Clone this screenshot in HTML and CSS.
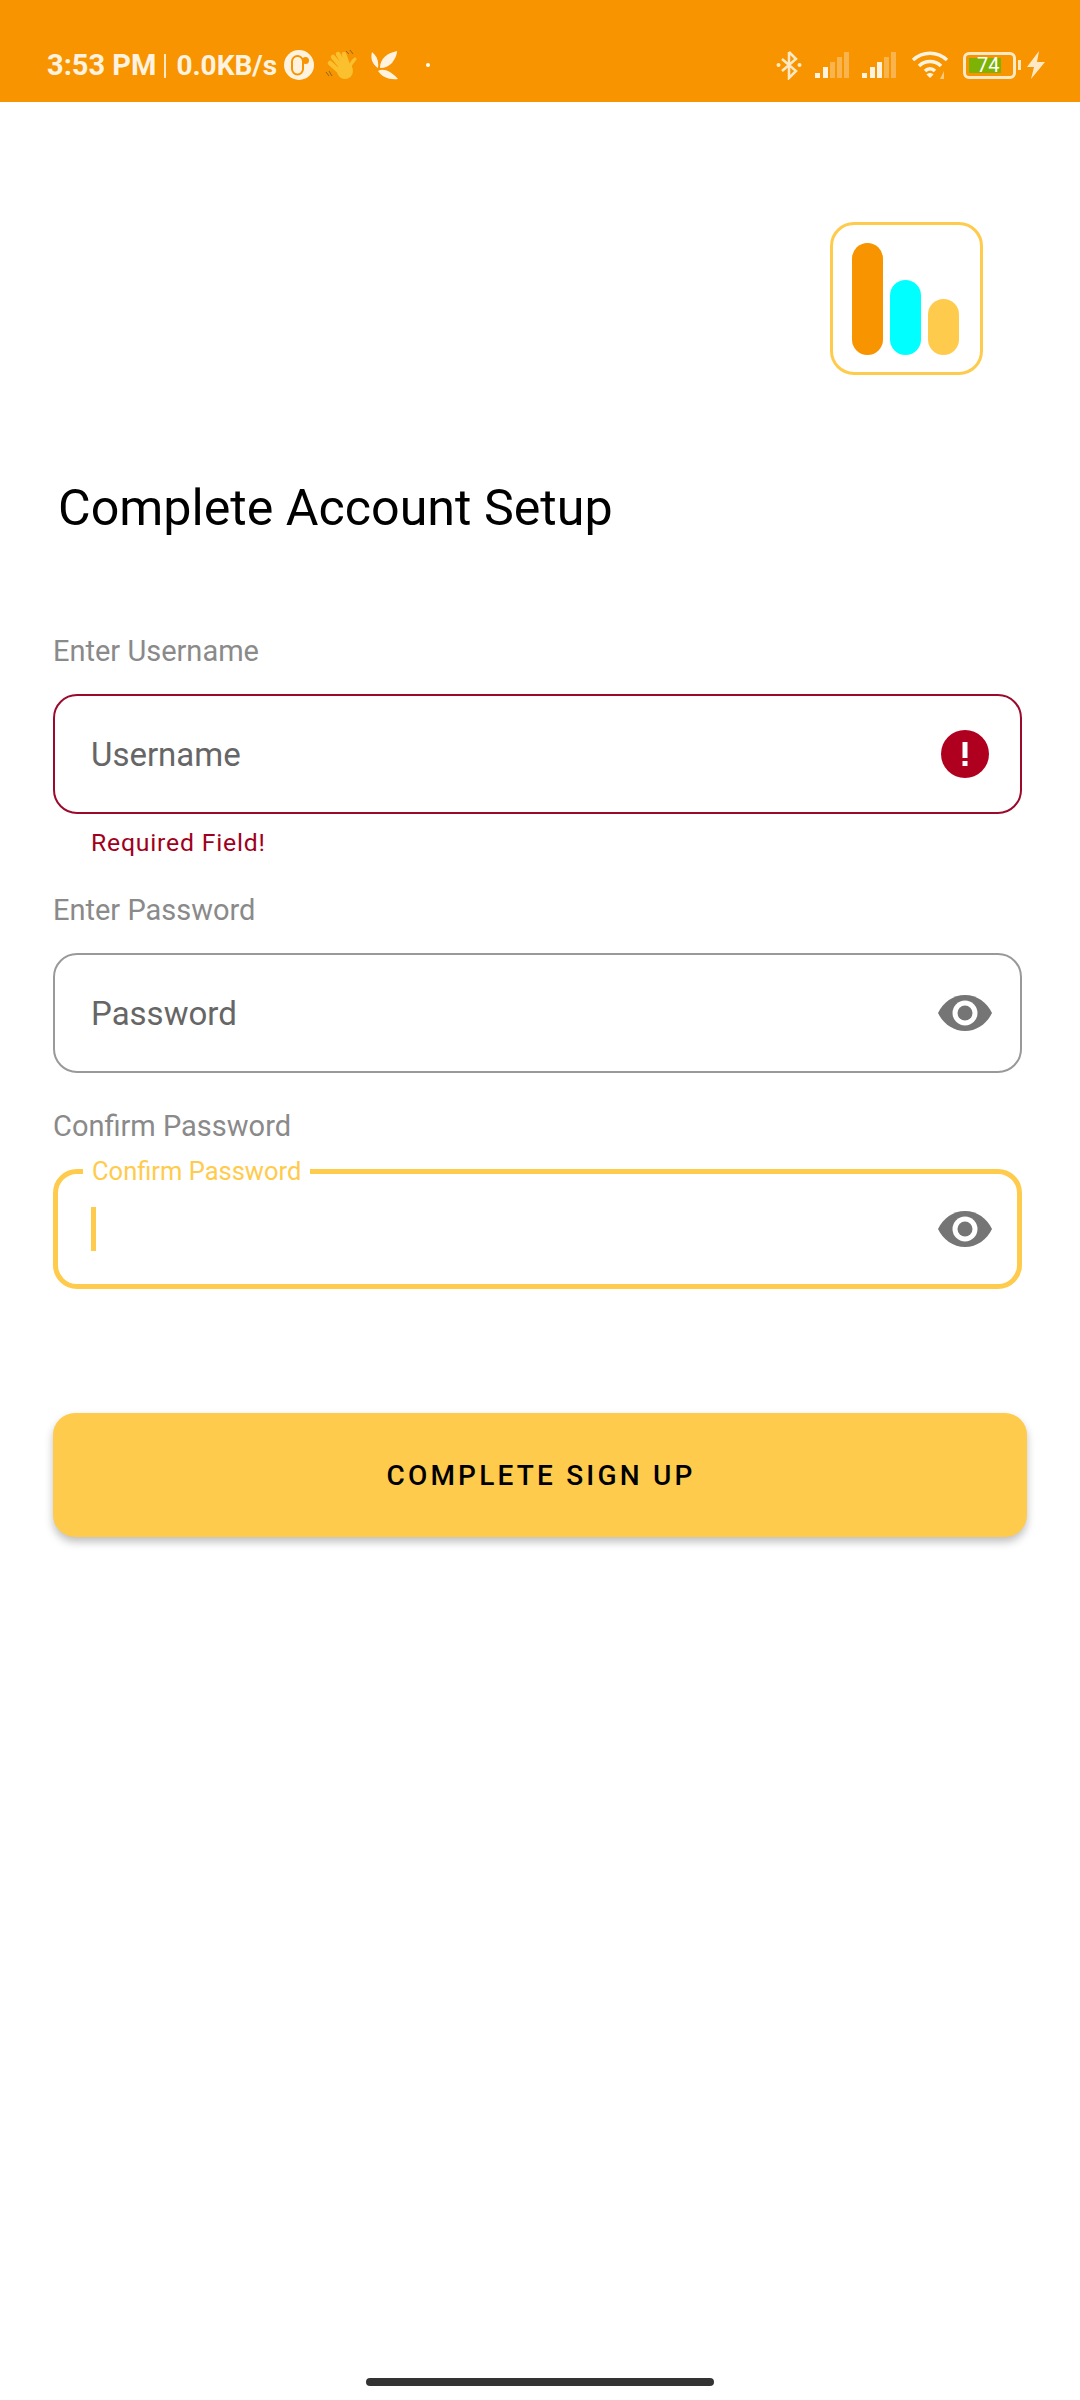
FILE: index.html
```html
<!DOCTYPE html>
<html lang="en">

<head>
    <meta charset="UTF-8">
    <meta name="viewport" content="width=device-width, initial-scale=1.0">
    <title>Complete Account Setup</title>
    <link rel="stylesheet" href="styles.css">
</head>

<body>
    <div class="status-bar">
        <div class="status-left">
            <span class="clock">3:53 PM</span>
            <span class="divider"></span>
            <span class="speed">0.0KB/s</span>
            <svg class="ico-app" width="30" height="30" viewBox="0 0 30 30">
                <circle cx="15" cy="15" r="15" fill="#fff3e0" />
                <rect x="8" y="6" width="11" height="18.500" rx="5.500" fill="#fff3e0" stroke="#f79400" stroke-width="2" />
                <circle cx="21.500" cy="10.500" r="3.500" fill="#f79400" />
            </svg>
            <svg class="ico-hand" width="32" height="30" viewBox="0 0 32 30">
                <path d="M5 13l11 10M8 7l11 13M13 4l9 15M19 4l5 14" stroke="#fbc02d" stroke-width="4.500" stroke-linecap="round" fill="none" />
                <path d="M30 9c-3 2-4 5-5 8l-2 1z" fill="#fbc02d" stroke="#fbc02d" stroke-width="3" stroke-linejoin="round" />
                <circle cx="20" cy="21" r="8" fill="#fbc02d" />
                <path d="M21 1l3 3M25 0l3 4M1 22l3 4M4 21l3 5" stroke="#8a6a2a" stroke-width="1" fill="none" />
            </svg>
            <svg class="ico-leaf" width="28" height="30" viewBox="0 0 28 30">
                <path d="M1 2C-1 9 2 15 7 18C8 11 6 6 1 2zM9 18C9 8 17 3 26 1C26 6 23 10 21 13C18 16 14 18 9 18zM7 21C12 18 20 21 27 29C18 30 11 27 7 21z" fill="#fff3e0" />
            </svg>
            <span class="status-dot"></span>
        </div>
        <div class="status-right">
            <svg width="26" height="30" viewBox="0 0 26 30">
                <path d="M13 2v26l7-7-14-12M13 2l7 7-14 12" stroke="#ffe9c4" stroke-width="2.500" fill="none" />
                <circle cx="2.500" cy="15" r="2" fill="#ffe9c4" />
                <circle cx="23.500" cy="15" r="2" fill="#ffe9c4" />
            </svg>
            <svg class="ico-signal ico-signal-first" width="35" height="26" viewBox="0 0 35 26">
                <rect x="0" y="21" width="5" height="5" fill="#fff3e0" />
                <rect x="8" y="15" width="5" height="11" fill="#fff3e0" />
                <rect x="15" y="10" width="5" height="16" fill="#fff" fill-opacity=".3" />
                <rect x="22" y="5" width="5" height="21" fill="#fff" fill-opacity=".3" />
                <rect x="29" y="0" width="5" height="26" fill="#fff" fill-opacity=".3" />
            </svg>
            <svg class="ico-signal" width="35" height="26" viewBox="0 0 35 26">
                <rect x="0" y="21" width="5" height="5" fill="#fff3e0" />
                <rect x="8" y="15" width="5" height="11" fill="#fff3e0" />
                <rect x="15" y="10" width="5" height="16" fill="#fff3e0" />
                <rect x="22" y="5" width="5" height="21" fill="#fff" fill-opacity=".3" />
                <rect x="29" y="0" width="5" height="26" fill="#fff" fill-opacity=".3" />
            </svg>
            <svg class="ico-wifi" width="38" height="28" viewBox="0 0 38 28">
                <path d="M2 9c10-9 24-9 34 0M8 15c6-6 16-6 22 0M14 20c3-3 7-3 10 0" stroke="#fff3e0" stroke-width="3.500" fill="none" />
                <path d="M15.500 23.500c2-2 5-2 7 0L19 27z" fill="#fff3e0" />
                <path d="M33 20v8h-4z" fill="#fff" fill-opacity=".5" />
            </svg>
            <div class="battery">
                <div class="battery-body">
                    <div class="battery-fill"></div>
                    <span class="battery-num">74</span>
                </div>
                <div class="battery-tip"></div>
            </div>
            <svg class="ico-bolt" width="18" height="28" viewBox="0 0 18 28">
                <path d="M12 0L0 16h7L4 28 18 11h-8z" fill="#ffe9c4" />
            </svg>
        </div>
    </div>

    <div class="page">
        <div class="logo-row">
            <div class="logo">
                <span class="bar bar-tall"></span>
                <span class="bar bar-mid"></span>
                <span class="bar bar-low"></span>
            </div>
        </div>

        <h1 class="title">Complete Account Setup</h1>

        <form class="form">
            <label class="field-label">Enter Username</label>
            <div class="field field-error">
                <span class="field-text">Username</span>
                <svg class="ico-error" width="48" height="48" viewBox="0 0 48 48">
                    <circle cx="24" cy="24" r="24" fill="#b00020" />
                    <rect x="21.500" y="12" width="5" height="16" fill="#fff" />
                    <rect x="21.500" y="31" width="5" height="5" fill="#fff" />
                </svg>
            </div>
            <div class="error-msg">Required Field!</div>

            <label class="field-label label-password">Enter Password</label>
            <div class="field">
                <span class="field-text">Password</span>
                <svg class="ico-eye" width="54" height="36" viewBox="0 0 54 36">
                    <path d="M27 0C15 0 5 7.500 0 18c5 10.500 15 18 27 18s22-7.500 27-18C49 7.500 39 0 27 0z" fill="#757575" />
                    <circle cx="27" cy="18" r="12.500" fill="#fff" />
                    <circle cx="27" cy="18" r="7.500" fill="#757575" />
                </svg>
            </div>

            <label class="field-label label-confirm">Confirm Password</label>
            <div class="field field-focus">
                <span class="float-label">Confirm Password</span>
                <span class="caret"></span>
                <svg class="ico-eye" width="54" height="36" viewBox="0 0 54 36">
                    <path d="M27 0C15 0 5 7.500 0 18c5 10.500 15 18 27 18s22-7.500 27-18C49 7.500 39 0 27 0z" fill="#757575" />
                    <circle cx="27" cy="18" r="12.500" fill="#fff" />
                    <circle cx="27" cy="18" r="7.500" fill="#757575" />
                </svg>
            </div>

            <button type="button" class="submit-btn">COMPLETE SIGN UP</button>
        </form>
    </div>

    <div class="home-bar"></div>
</body>

</html>
```

FILE: styles.css
```css
html,
body {
    margin: 0;
    padding: 0;
}

body {
    width: 1080px;
    height: 2400px;
    position: relative;
    overflow: hidden;
    background-color: #fff;
    font-family: Roboto, "Liberation Sans", sans-serif;
}

/* Status bar */
.status-bar {
    height: 74px;
    padding: 28px 35px 0 47px;
    display: flex;
    align-items: center;
    justify-content: space-between;
    background-color: #f79400;
}

.status-left,
.status-right {
    display: flex;
    align-items: center;
}

.clock {
    font-size: 29px;
    font-weight: 700;
    color: #fff3e0;
}

.speed {
    font-size: 28px;
    font-weight: 700;
    color: #fff3e0;
}

.divider {
    width: 2px;
    height: 24px;
    margin: 2px 10px 0 8px;
    background-color: #ffe9c4;
}

.ico-app {
    margin-left: 7px;
}

.ico-hand {
    margin-left: 11px;
}

.ico-leaf {
    margin-left: 14px;
}

.status-dot {
    width: 4px;
    height: 4px;
    margin-left: 27px;
    border-radius: 50%;
    background-color: #fff;
}

.ico-signal {
    margin-left: 12px;
}

.ico-signal-first {
    margin-left: 13px;
}

.ico-wifi {
    margin-left: 14px;
}

.battery {
    display: flex;
    align-items: center;
    margin-left: 14px;
}

.battery-body {
    width: 53px;
    height: 27px;
    box-sizing: border-box;
    padding: 3px;
    position: relative;
    border: 3px solid #ffe9c4;
    border-radius: 6px;
}

.battery-fill {
    width: 32px;
    height: 100%;
    background-color: #7cb305;
}

.battery-num {
    position: absolute;
    top: 0;
    left: 11px;
    font-size: 20px;
    line-height: 21px;
    color: #fff;
}

.battery-tip {
    width: 3px;
    height: 10px;
    margin-left: 2px;
    background-color: #ffe9c4;
}

.ico-bolt {
    margin-left: 6px;
}

/* Page */
.page {
    padding: 120px 58px 0 53px;
}

.logo-row {
    display: flex;
    justify-content: flex-end;
    padding-right: 39px;
}

.logo {
    width: 153px;
    height: 153px;
    box-sizing: border-box;
    padding: 0 0 17px 19px;
    display: flex;
    align-items: flex-end;
    gap: 7px;
    border: 3px solid #ffcb4c;
    border-radius: 24px;
}

.bar {
    width: 31px;
    border-radius: 16px;
}

.bar-tall {
    height: 112px;
    background-color: #f79400;
}

.bar-mid {
    height: 75px;
    background-color: #00ffff;
}

.bar-low {
    height: 56px;
    background-color: #ffcb4c;
}

.title {
    margin: 105px 0 0 5px;
    font-size: 50.2px;
    line-height: 56px;
    font-weight: 400;
    color: #000;
}

/* Form */
.form {
    margin-top: 99px;
    display: flex;
    flex-direction: column;
}

.field-label {
    font-size: 29px;
    line-height: 32px;
    color: #8a8a8a;
}

.label-password {
    margin-top: 37px;
}

.label-confirm {
    margin-top: 37px;
}

.field {
    height: 120px;
    margin-top: 27px;
    box-sizing: border-box;
    padding: 0 28px 0 36px;
    position: relative;
    display: flex;
    align-items: center;
    justify-content: space-between;
    border: 2px solid #999;
    border-radius: 24px;
}

.field-text {
    font-size: 33px;
    color: #666;
}

.field-error {
    border-color: #9b0a2c;
}

.field-error .ico-error {
    margin-right: 3px;
}

.error-msg {
    margin: 15px 0 0 38px;
    font-size: 24.75px;
    line-height: 28px;
    letter-spacing: 0.8px;
    color: #a00020;
}

.field-focus {
    padding-left: 33px;
    padding-right: 25px;
    border: 5px solid #ffcb4c;
}

.float-label {
    position: absolute;
    top: -17px;
    left: 25px;
    padding: 0 9px;
    font-size: 25.5px;
    line-height: 28px;
    color: #ffcb4c;
    background-color: #fff;
}

.caret {
    width: 5px;
    height: 44px;
    background-color: #ffcb4c;
}

.submit-btn {
    height: 124px;
    width: 974px;
    margin-top: 124px;
    padding: 0 0 0 2px;
    font-family: Roboto, "Liberation Sans", sans-serif;
    font-size: 28px;
    font-weight: 500;
    letter-spacing: 3.2px;
    color: #000;
    border: none;
    border-radius: 22px;
    background-color: #ffcb4c;
    box-shadow: 0 5px 8px rgba(0, 0, 0, 0.25);
}

.home-bar {
    position: absolute;
    left: 366px;
    top: 2378px;
    width: 348px;
    height: 8px;
    border-radius: 4px;
    background-color: #333;
}
```
